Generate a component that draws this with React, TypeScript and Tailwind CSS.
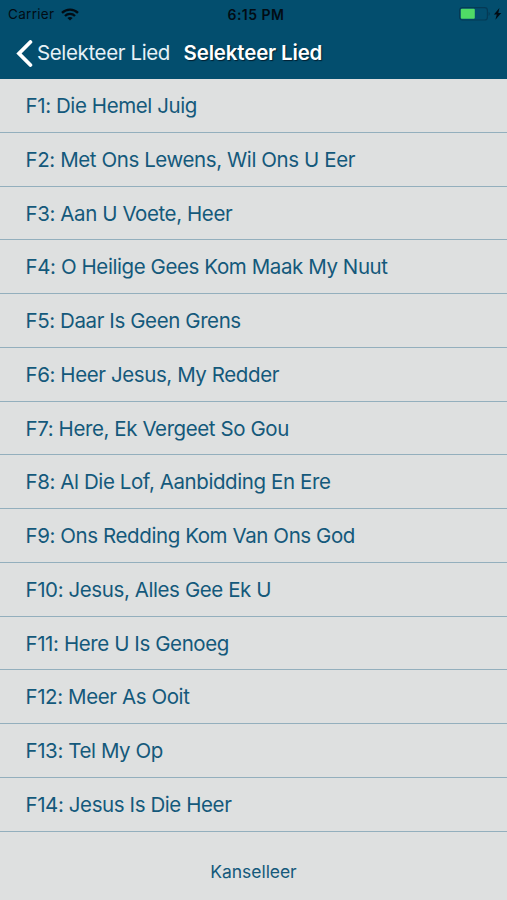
import React from 'react';

interface Song {
  code: string;
  title: string;
}

const songs: Song[] = [
  { code: 'F1', title: 'Die Hemel Juig' },
  { code: 'F2', title: 'Met Ons Lewens, Wil Ons U Eer' },
  { code: 'F3', title: 'Aan U Voete, Heer' },
  { code: 'F4', title: 'O Heilige Gees Kom Maak My Nuut' },
  { code: 'F5', title: 'Daar Is Geen Grens' },
  { code: 'F6', title: 'Heer Jesus, My Redder' },
  { code: 'F7', title: 'Here, Ek Vergeet So Gou' },
  { code: 'F8', title: 'Al Die Lof, Aanbidding En Ere' },
  { code: 'F9', title: 'Ons Redding Kom Van Ons God' },
  { code: 'F10', title: 'Jesus, Alles Gee Ek U' },
  { code: 'F11', title: 'Here U Is Genoeg' },
  { code: 'F12', title: 'Meer As Ooit' },
  { code: 'F13', title: 'Tel My Op' },
  { code: 'F14', title: 'Jesus Is Die Heer' },
];

const WifiIcon: React.FC = () => (
  <svg className="ml-[7px] h-[13px] w-[18px]" viewBox="0 0 18 13" fill="none" stroke="#020c14" strokeWidth="2.3">
    <path d="M1 4.9C5.4 0.5 12.6 0.5 17 4.9" />
    <path d="M4 8C6.8 5.2 11.2 5.2 14 8" />
    <path d="M9 12.4L6.4 9.9C7.8 8.6 10.2 8.6 11.6 9.9Z" fill="#020c14" stroke="none" />
  </svg>
);

const BatteryIcon: React.FC = () => (
  <svg className="h-[14px] w-[43px]" viewBox="0 0 43 14" fill="none">
    <rect x="0.6" y="0.6" width="27.8" height="12.4" rx="2.8" stroke="#053a55" strokeWidth="1.2" />
    <rect x="1.8" y="1.8" width="14" height="10" rx="1" fill="#4fdb66" />
    <path d="M29.6 4.8C31.2 5.6 31.2 8.2 29.6 9Z" fill="#053a55" />
    <path d="M40.4 1L34.9 7.6H37.8L36.4 12.8L42.3 6H39.3Z" fill="#020c14" />
  </svg>
);

const StatusBar: React.FC = () => (
  <div className="grid h-[28px] grid-cols-3 items-center pl-2 pr-[5px] text-[13.5px] text-[#020c14]">
    <div className="flex items-center">
      <span className="tracking-[0.3px]">Carrier</span>
      <WifiIcon />
    </div>
    <span className="pl-[2px] text-center text-[14px] font-semibold tracking-[0.5px]">6:15 PM</span>
    <div className="flex justify-end">
      <BatteryIcon />
    </div>
  </div>
);

const NavBar: React.FC = () => (
  <div className="flex h-[50px] items-center pl-[16px] text-white">
    <button className="flex items-center">
      <svg className="h-[27px] w-[17px]" viewBox="0 0 17 27" fill="none" stroke="currentColor" strokeWidth="3.8">
        <path d="M14.4 2L3 13.5L14.4 25" strokeLinecap="round" />
      </svg>
      <span className="ml-[4px] whitespace-nowrap text-[20.5px] leading-[26px] tracking-[-0.37px] text-[#e6f1f7]">
        Selekteer Lied
      </span>
    </button>
    <h1 className="ml-[13.5px] whitespace-nowrap text-[20.5px] font-semibold leading-[26px] tracking-[-0.17px] [text-shadow:1px_1px_1px_#021f30]">
      Selekteer Lied
    </h1>
  </div>
);

const App: React.FC = () => {
  return (
    <div className="flex h-[900px] w-[507px] flex-col overflow-hidden bg-[#dee0e0] font-['Inter',sans-serif] text-[#14597b]">
      <header className="h-[79px] shrink-0 bg-[#034e6e]">
        <StatusBar />
        <NavBar />
      </header>
      <ul className="shrink-0">
        {songs.map((song) => (
          <li
            key={song.code}
            className="flex h-[53.75px] items-center border-b border-[#93afbd] pl-[25.5px] pt-[2px] text-[20.5px] tracking-[-0.41px]"
          >
            {song.code}: {song.title}
          </li>
        ))}
      </ul>
      <button className="flex flex-1 items-center justify-center pt-[13px] text-[17.5px] tracking-[-0.05px]">
        Kanselleer
      </button>
    </div>
  );
};

export default App;
